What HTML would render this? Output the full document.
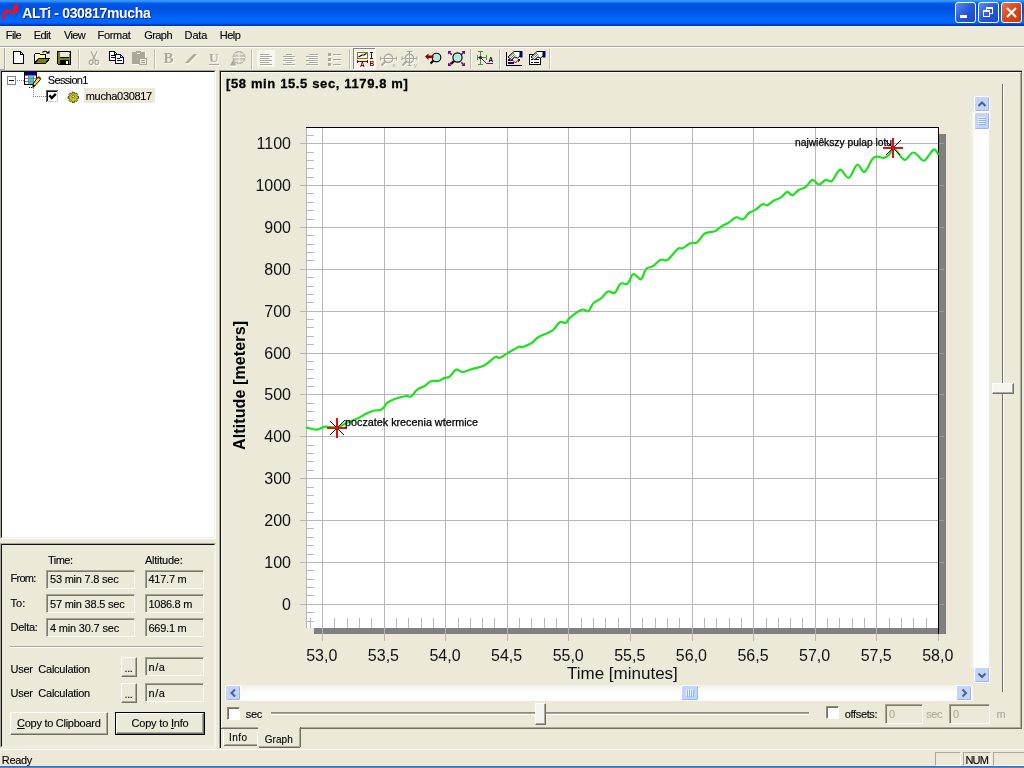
<!DOCTYPE html>
<html><head><meta charset="utf-8">
<style>
html,body{margin:0;padding:0;overflow:hidden;}
body{width:1024px;height:768px;overflow:hidden;background:#ECE9D8;font-family:"Liberation Sans",sans-serif;font-size:11px;color:#000;position:relative;}
.a{position:absolute;white-space:pre;}
div.a{-webkit-text-stroke:0.12px currentColor;}
#title{left:0;top:0;width:1024px;height:26px;background:linear-gradient(to bottom,#3A9CFF 0px,#2F8CFA 1.5px,#0562EA 3px,#0054E3 5px,#0050E0 8px,#0058E8 12px,#0066FF 19px,#0064FA 23px,#0042CA 24.5px,#002E9E 26px);}
.cb{position:absolute;top:2px;width:19px;height:19px;border:1px solid #fff;border-radius:3px;background:linear-gradient(135deg,#5C8CF0 0%,#2658D8 50%,#1B47C8 100%);}
.sunk{position:absolute;box-sizing:border-box;border:1px solid;border-color:#A6A293 #FBFAF6 #FBFAF6 #A6A293;box-shadow:inset 1px 1px 0 #7C796D;}
.btn{position:absolute;box-sizing:border-box;border:1px solid;border-color:#fff #716F64 #716F64 #fff;box-shadow:inset -1px -1px 0 #ACA899;}
.sb{position:absolute;box-sizing:border-box;border:1px solid #fff;border-radius:2px;background:#C3D4FD;box-shadow:inset -1px -1px 0 #9DB4EE;}
</style></head><body>
<div id="root" class="a" style="left:0;top:0;width:1024px;height:768px;overflow:hidden;will-change:transform">

<div id="title" class="a"></div>
<svg class="a" style="left:0;top:0" width="22" height="26"><path d="M3.2 18.5 C3.2 13.5 5 10.8 8 10.8 C10 10.8 10.3 13 12 13 C14.2 13 14.6 10 15.2 7" fill="none" stroke="#E6141E" stroke-width="3" stroke-linecap="round"/><path d="M12.6 6.2 L17.8 4 L17.6 13.5 L15.2 9.2 Z" fill="#F01018" stroke="#E6141E" stroke-width="0.8" stroke-linejoin="round"/></svg>
<div class="a" style="left:22.2px;top:5.33px;font-size:14px;line-height:16.09px;font-weight:bold;color:#fff;letter-spacing:-0.322px;text-shadow:1px 1px 0 #0A2A80;-webkit-text-stroke:0;">ALTi - 030817mucha</div>
<div class="cb" style="left:955px"><div class="a" style="left:4px;top:12px;width:7px;height:3px;background:#fff"></div></div>
<div class="cb" style="left:978px"><div class="a" style="left:7px;top:4px;width:5px;height:4px;border:1px solid #fff;border-top-width:2px"></div><div class="a" style="left:4px;top:7px;width:5px;height:4px;border:1px solid #fff;border-top-width:2px;background:#2E60DC"></div></div>
<div class="cb" style="left:1001px;background:linear-gradient(135deg,#E8734E 0%,#D9461C 50%,#C23A12 100%)"><svg class="a" style="left:0;top:0" width="19" height="19"><path d="M5 5 L14 14 M14 5 L5 14" stroke="#fff" stroke-width="2.2"/></svg></div>
<div class="a" style="left:5.8px;top:29.05px;font-size:11px;line-height:12.64px;color:#000;letter-spacing:-0.632px;">File</div>
<div class="a" style="left:33.7px;top:29.05px;font-size:11px;line-height:12.64px;color:#000;letter-spacing:-0.564px;">Edit</div>
<div class="a" style="left:63.9px;top:29.05px;font-size:11px;line-height:12.64px;color:#000;letter-spacing:-0.636px;">View</div>
<div class="a" style="left:97.6px;top:29.05px;font-size:11px;line-height:12.64px;color:#000;letter-spacing:-0.340px;">Format</div>
<div class="a" style="left:144.2px;top:29.05px;font-size:11px;line-height:12.64px;color:#000;letter-spacing:-0.555px;">Graph</div>
<div class="a" style="left:184.6px;top:29.05px;font-size:11px;line-height:12.64px;color:#000;letter-spacing:-0.159px;">Data</div>
<div class="a" style="left:219.8px;top:29.05px;font-size:11px;line-height:12.64px;color:#000;letter-spacing:-0.531px;">Help</div>
<div class="a" style="left:0px;top:26px;width:1024px;height:1px;background:#EEF2F8;"></div>
<div class="a" style="left:0px;top:46px;width:1024px;height:1px;background:#ACA899;"></div>
<div class="a" style="left:0px;top:47px;width:1024px;height:1px;background:#fff;"></div>
<svg class="a" style="left:0;top:48px" width="560" height="23" shape-rendering="crispEdges">
<rect x="4" y="0" width="1" height="22" fill="#ACA899"/>
<rect x="0" y="21" width="5" height="1" fill="#ACA899"/>
<rect x="5" y="0" width="1" height="22" fill="#F8F7F1"/>
<path transform="translate(0,-48)" d="M13.5 51.5 H20.5 L23.5 54.5 V63.5 H13.5 Z" fill="#fff" stroke="#000" stroke-width="1"  />
<path transform="translate(0,-48)" d="M20.5 51.5 V54.5 H23.5" fill="none" stroke="#000" stroke-width="1"  />
<path transform="translate(0,-48)" d="M34.5 63.5 V54.5 L35.5 53.5 H39.5 L40.5 54.5 H45.5 V58.5 H38.5 Z" fill="#FFFF9C" stroke="#000" stroke-width="1"  />
<path transform="translate(0,-48)" d="M34.5 63.5 L38.5 58.5 H49.5 L45.5 63.5 Z" fill="#808000" stroke="#000" stroke-width="1"  />
<path transform="translate(0,-48)" d="M42.5 52.5 Q45 49.8 47.8 53" fill="none" stroke="#000" stroke-width="1.2" shape-rendering='geometricPrecision' />
<path transform="translate(0,-48)" d="M46 53.5 H49.5 V50.5 Z" fill="#000" stroke="none" stroke-width="1" shape-rendering='geometricPrecision' />
<path transform="translate(0,-48)" d="M57.5 51.5 H70.5 V64.5 H58.5 L57.5 63.5 Z" fill="#808000" stroke="#000" stroke-width="1"  />
<rect x="60" y="4" width="9" height="6" fill="#E8E8E0"/>
<rect x="60" y="9" width="9" height="1" fill="#000"/>
<rect x="60" y="12" width="9" height="4" fill="#000"/>
<rect x="66" y="13" width="2" height="3" fill="#fff"/>
<rect x="69" y="5" width="1" height="1" fill="#fff"/>
<rect x="78" y="1" width="1" height="20" fill="#BFBCB0"/>
<rect x="79" y="1" width="1" height="20" fill="#FAF9F4"/>
<g transform="translate(1,-47)" shape-rendering="geometricPrecision" fill="none" stroke="#fff" stroke-width="1.3"><path d="M91 51.5 L95.5 60.5 M97 51.5 L92.5 60.5"/><ellipse cx="91.2" cy="62.3" rx="1.9" ry="2.2"/><ellipse cx="96.8" cy="62.3" rx="1.9" ry="2.2"/></g>
<g transform="translate(0,-48)" shape-rendering="geometricPrecision" fill="none" stroke="#ACA899" stroke-width="1.3"><path d="M91 51.5 L95.5 60.5 M97 51.5 L92.5 60.5"/><ellipse cx="91.2" cy="62.3" rx="1.9" ry="2.2"/><ellipse cx="96.8" cy="62.3" rx="1.9" ry="2.2"/></g>
<path transform="translate(0,-48)" d="M109.5 51.5 H114.5 L117.5 54.5 V60.5 H109.5 Z" fill="#fff" stroke="#000" stroke-width="1"  />
<path transform="translate(0,-48)" d="M114.5 51.5 V54.5 H117.5" fill="none" stroke="#000" stroke-width="1"  />
<rect x="111" y="7" width="4" height="1" fill="#000"/>
<rect x="111" y="9" width="4" height="1" fill="#000"/>
<path transform="translate(0,-48)" d="M115.5 54.5 H120.5 L123.5 57.5 V63.5 H115.5 Z" fill="#fff" stroke="#000080" stroke-width="1"  />
<path transform="translate(0,-48)" d="M120.5 54.5 V57.5 H123.5" fill="none" stroke="#000080" stroke-width="1"  />
<rect x="117" y="10" width="3" height="1" fill="#000"/>
<rect x="117" y="12" width="5" height="1" fill="#000"/>
<rect x="133" y="5" width="13" height="12" fill="#fff"/>
<rect x="132" y="4" width="13" height="12" fill="#ACA899"/>
<rect x="136" y="3" width="5" height="2" fill="#ACA899"/>
<rect x="137" y="5" width="3" height="1" fill="#fff"/>
<rect x="139" y="10" width="8" height="7" fill="#ACA899"/>
<rect x="140" y="11" width="6" height="5" fill="#ECE9D8"/>
<rect x="141" y="12" width="4" height="1" fill="#ACA899"/>
<rect x="141" y="14" width="4" height="1" fill="#ACA899"/>
<rect x="154" y="1" width="1" height="20" fill="#BFBCB0"/>
<rect x="155" y="1" width="1" height="20" fill="#FAF9F4"/>
<g shape-rendering="geometricPrecision" font-family="Liberation Serif, serif" font-weight="bold" font-size="15">
<text x="164.5" y="16" fill="#fff">B</text><text x="163.5" y="15" fill="#ACA899">B</text>
<text x="210" y="15" fill="#fff" font-size="13.5">U</text><text x="209" y="14" fill="#ACA899" font-size="13.5">U</text>
</g>
<rect x="209" y="16" width="10" height="1" fill="#ACA899"/>
<rect x="210" y="17" width="10" height="1" fill="#fff"/>
<path transform="translate(0,-48)" d="M185 63 H188.2 L197 54 H193.8 Z" fill="#ACA899" stroke="none" stroke-width="1" shape-rendering='geometricPrecision' />
<path transform="translate(0,-48)" d="M186 64 H189.2 L198 55" fill="none" stroke="#fff" stroke-width="1" shape-rendering='geometricPrecision' />
<g shape-rendering="geometricPrecision" transform="translate(0,-48)"><circle cx="239" cy="57.5" r="6" fill="#C9C6B8" stroke="#ACA899"/><path d="M233 57.5 H245 M239 51.5 V63.5 M234.5 54 H243.5 M234.5 61 H243.5" stroke="#F4F3EE" stroke-width="1"/><path d="M230 65.5 L233.5 59 L236 65.5 Z" fill="#ACA899"/><path d="M230 66.5 H237" stroke="#fff"/></g>
<rect x="251" y="1" width="1" height="20" fill="#BFBCB0"/>
<rect x="252" y="1" width="1" height="20" fill="#FAF9F4"/>
<rect x="257" y="2" width="18" height="17" fill="#F6F5EE"/>
<rect x="261" y="7" width="9" height="1" fill="#fff"/>
<rect x="260" y="6" width="9" height="1" fill="#ACA899"/>
<rect x="261" y="9" width="12" height="1" fill="#fff"/>
<rect x="260" y="8" width="12" height="1" fill="#ACA899"/>
<rect x="261" y="11" width="9" height="1" fill="#fff"/>
<rect x="260" y="10" width="9" height="1" fill="#ACA899"/>
<rect x="261" y="13" width="12" height="1" fill="#fff"/>
<rect x="260" y="12" width="12" height="1" fill="#ACA899"/>
<rect x="261" y="15" width="9" height="1" fill="#fff"/>
<rect x="260" y="14" width="9" height="1" fill="#ACA899"/>
<rect x="261" y="17" width="12" height="1" fill="#fff"/>
<rect x="260" y="16" width="12" height="1" fill="#ACA899"/>
<rect x="287" y="7" width="6" height="1" fill="#fff"/>
<rect x="286" y="6" width="6" height="1" fill="#ACA899"/>
<rect x="284" y="9" width="12" height="1" fill="#fff"/>
<rect x="283" y="8" width="12" height="1" fill="#ACA899"/>
<rect x="286" y="11" width="8" height="1" fill="#fff"/>
<rect x="285" y="10" width="8" height="1" fill="#ACA899"/>
<rect x="284" y="13" width="12" height="1" fill="#fff"/>
<rect x="283" y="12" width="12" height="1" fill="#ACA899"/>
<rect x="287" y="15" width="6" height="1" fill="#fff"/>
<rect x="286" y="14" width="6" height="1" fill="#ACA899"/>
<rect x="284" y="17" width="12" height="1" fill="#fff"/>
<rect x="283" y="16" width="12" height="1" fill="#ACA899"/>
<rect x="310" y="7" width="9" height="1" fill="#fff"/>
<rect x="309" y="6" width="9" height="1" fill="#ACA899"/>
<rect x="307" y="9" width="12" height="1" fill="#fff"/>
<rect x="306" y="8" width="12" height="1" fill="#ACA899"/>
<rect x="310" y="11" width="9" height="1" fill="#fff"/>
<rect x="309" y="10" width="9" height="1" fill="#ACA899"/>
<rect x="307" y="13" width="12" height="1" fill="#fff"/>
<rect x="306" y="12" width="12" height="1" fill="#ACA899"/>
<rect x="310" y="15" width="9" height="1" fill="#fff"/>
<rect x="309" y="14" width="9" height="1" fill="#ACA899"/>
<rect x="307" y="17" width="12" height="1" fill="#fff"/>
<rect x="306" y="16" width="12" height="1" fill="#ACA899"/>
<rect x="329" y="6" width="3" height="3" fill="#fff"/>
<rect x="328" y="5" width="3" height="3" fill="#ACA899"/>
<rect x="334" y="7" width="8" height="1" fill="#fff"/>
<rect x="333" y="6" width="8" height="1" fill="#ACA899"/>
<rect x="329" y="11" width="3" height="3" fill="#fff"/>
<rect x="328" y="10" width="3" height="3" fill="#ACA899"/>
<rect x="334" y="12" width="8" height="1" fill="#fff"/>
<rect x="333" y="11" width="8" height="1" fill="#ACA899"/>
<rect x="329" y="16" width="3" height="3" fill="#fff"/>
<rect x="328" y="15" width="3" height="3" fill="#ACA899"/>
<rect x="334" y="17" width="8" height="1" fill="#fff"/>
<rect x="333" y="16" width="8" height="1" fill="#ACA899"/>
<rect x="349" y="1" width="1" height="20" fill="#BFBCB0"/>
<rect x="350" y="1" width="1" height="20" fill="#FAF9F4"/>
<rect x="353" y="0" width="23" height="22" fill="#F6F5EE"/>
<rect x="353" y="0" width="23" height="1" fill="#8A877A"/>
<rect x="353" y="0" width="1" height="22" fill="#8A877A"/>
<rect x="375" y="0" width="1" height="22" fill="#fff"/>
<rect x="353" y="21" width="23" height="1" fill="#fff"/>
<path transform="translate(0,-48)" d="M357.5 52.5 H367.5 V58.5 H357.5 Z" fill="#fff" stroke="#808000" stroke-width="1"  />
<path transform="translate(0,-48)" d="M358.5 57 L362 55 L364 55 L366.5 53.5" fill="none" stroke="#000" stroke-width="1.2" shape-rendering='geometricPrecision' />
<rect x="357" y="13" width="11" height="1" fill="#800000"/>
<rect x="357" y="12" width="1" height="3" fill="#800000"/>
<rect x="367" y="12" width="1" height="3" fill="#800000"/>
<rect x="371" y="5" width="1" height="6" fill="#800000"/>
<rect x="370" y="4" width="3" height="1" fill="#800000"/>
<rect x="370" y="10" width="3" height="1" fill="#800000"/>
<g shape-rendering="geometricPrecision" font-family="Liberation Sans, sans-serif" font-weight="bold" font-size="6.5" fill="#800000"><text x="360" y="19">A</text><text x="369.5" y="18.299999999999997">B</text></g>
<g shape-rendering="geometricPrecision" transform="translate(0,-48)" fill="none">
<g transform="translate(1,1)" stroke="#fff"><circle cx="388.5" cy="58.5" r="4.2" stroke-width="1.4"/><path d="M385.5 61.5 L381.5 65.5" stroke-width="2"/>
<path d="M380.5 58.5 H396.5 M380.5 56.5 V60.5 M396.5 56.5 V60.5" stroke-width="1"/>
</g>
<g transform="translate(0,0)" stroke="#ACA899"><circle cx="388.5" cy="58.5" r="4.2" stroke-width="1.4"/><path d="M385.5 61.5 L381.5 65.5" stroke-width="2"/>
<path d="M380.5 58.5 H396.5 M380.5 56.5 V60.5 M396.5 56.5 V60.5" stroke-width="1"/>
</g>
</g>
<g shape-rendering="geometricPrecision" transform="translate(0,-48)" fill="none">
<g transform="translate(1,1)" stroke="#fff"><circle cx="409.5" cy="58.5" r="4.2" stroke-width="1.4"/><path d="M406.5 61.5 L402.5 65.5" stroke-width="2"/>
<path d="M409.5 51.5 V65.5 M406.5 51.5 H412.5 M407.5 65.5 H411.5 M402.0 58.5 H417.0 M402.0 56.5 V60.5 M417.0 56.5 V60.5" stroke-width="1"/>
</g>
<g transform="translate(0,0)" stroke="#ACA899"><circle cx="409.5" cy="58.5" r="4.2" stroke-width="1.4"/><path d="M406.5 61.5 L402.5 65.5" stroke-width="2"/>
<path d="M409.5 51.5 V65.5 M406.5 51.5 H412.5 M407.5 65.5 H411.5 M402.0 58.5 H417.0 M402.0 56.5 V60.5 M417.0 56.5 V60.5" stroke-width="1"/>
</g>
</g>
<g shape-rendering="geometricPrecision" font-family="Liberation Sans, sans-serif" font-size="6" fill="#ACA899"><text x="392.5" y="19">x</text><text x="414" y="19">y</text></g>
<g shape-rendering="geometricPrecision" transform="translate(0,-48)">
<circle cx="436.5" cy="57.5" r="4.3" fill="#B0ECDC" stroke="#000" stroke-width="1.15"/><path d="M433.5 60.5 L430.5 63.5" stroke="#000" stroke-width="2.2"/>
<path d="M425 56.5 L428.5 53.5 V55.5 H433.5 V58 H428.5 V60 Z" fill="#900000"/>
<circle cx="457.5" cy="57.5" r="4.6" fill="#B0ECDC" stroke="#000" stroke-width="1.15"/><path d="M454 61 L451 64" stroke="#000" stroke-width="2.4"/>
<path d="M448 51 h3.5 l-1.2 1.2 l2 2 l-1.1 1.1 l-2 -2 l-1.2 1.2 Z" fill="#800080"/>
<path d="M465 51 h-3.5 l1.2 1.2 l-2 2 l1.1 1.1 l2 -2 l1.2 1.2 Z" fill="#800080"/>
<path d="M448 66 h3.5 l-1.2 -1.2 l2 -2 l-1.1 -1.1 l-2 2 l-1.2 -1.2 Z" fill="#800080"/>
<path d="M465 66 h-3.5 l1.2 -1.2 l-2 -2 l1.1 -1.1 l2 2 l1.2 -1.2 Z" fill="#800080"/>
</g>
<rect x="470" y="1" width="1" height="20" fill="#BFBCB0"/>
<rect x="471" y="1" width="1" height="20" fill="#FAF9F4"/>
<rect x="480" y="3" width="1" height="14" fill="#30A030"/>
<rect x="478" y="3" width="5" height="1" fill="#30A030"/>
<rect x="478" y="16" width="5" height="1" fill="#30A030"/>
<rect x="477" y="9" width="10" height="1" fill="#30A030"/>
<rect x="477" y="7" width="1" height="5" fill="#30A030"/>
<rect x="486" y="7" width="1" height="5" fill="#30A030"/>
<path transform="translate(0,-48)" d="M480.5 57.5 L486.5 63.5 H493" fill="none" stroke="#800080" stroke-width="1" shape-rendering='geometricPrecision' />
<circle cx="480.5" cy="9.5" r="1.6" fill="#600040" shape-rendering="geometricPrecision"/>
<text x="488.5" y="14" shape-rendering="geometricPrecision" font-family="Liberation Sans, sans-serif" font-weight="bold" font-size="6.5" fill="#000">A</text>
<rect x="499" y="1" width="1" height="20" fill="#BFBCB0"/>
<rect x="500" y="1" width="1" height="20" fill="#FAF9F4"/>
<rect x="506" y="4" width="1" height="14" fill="#000"/>
<rect x="506" y="17" width="16" height="1" fill="#000"/>
<rect x="508" y="12" width="5" height="1" fill="#C00000"/>
<rect x="508" y="14" width="6" height="2" fill="#0000C0"/>
<rect x="508" y="11" width="2" height="2" fill="#400000"/>
<path transform="translate(0,-48)" d="M513 60.5 L515.5 63 L517.5 60.5 L519 62" fill="none" stroke="#C00000" stroke-width="1" shape-rendering='geometricPrecision' />
<rect x="518" y="11" width="2" height="2" fill="#202020"/>
<g shape-rendering="geometricPrecision" transform="translate(506,-48)">
<path d="M2 57 L8 51.5 H14 V56 L11.5 58 L8.5 57 L6 60 Z" fill="#fff" stroke="#000" stroke-width="1"/>
<path d="M3.5 57 L8 53 M5 58 L9 54 M6 59 L10 55.5" stroke="#606060" stroke-width="0.8"/>
<path d="M14 51 H16.5 V57.5 H14 Z" fill="#000080"/>
</g>
<path transform="translate(0,-48)" d="M529.5 54.5 H540.5 V64.5 H529.5 Z" fill="#fff" stroke="#000" stroke-width="1"  />
<rect x="529" y="7" width="1" height="10" fill="#000"/>
<rect x="531" y="11" width="2" height="1" fill="#000"/>
<rect x="534" y="11" width="5" height="1" fill="#000"/>
<rect x="531" y="14" width="2" height="1" fill="#000"/>
<rect x="534" y="14" width="5" height="1" fill="#000"/>
<g shape-rendering="geometricPrecision" transform="translate(529,-48)">
<path d="M2 57 L8 51.5 H14 V56 L11.5 58 L8.5 57 L6 60 Z" fill="#fff" stroke="#000" stroke-width="1"/>
<path d="M3.5 57 L8 53 M5 58 L9 54 M6 59 L10 55.5" stroke="#606060" stroke-width="0.8"/>
<path d="M14 51 H16.5 V57.5 H14 Z" fill="#000080"/>
</g>
<rect x="549" y="1" width="1" height="20" fill="#BFBCB0"/>
<rect x="550" y="1" width="1" height="20" fill="#FAF9F4"/>
</svg>
<div class="a" style="left:0px;top:70px;width:216px;height:469px;background:#fff;box-sizing:border-box;border-top:1px solid #ACA899;border-left:1px solid #ACA899;border-right:1px solid #fff;border-bottom:1px solid #fff;"></div>
<div class="a" style="left:1px;top:71px;width:214px;height:467px;background:#fff;box-sizing:border-box;border-top:1px solid #111;border-left:1px solid #111;border-right:1px solid #F1EFE2;border-bottom:1px solid #F1EFE2;"></div>
<svg class="a" style="left:0;top:70px" width="216" height="40" shape-rendering="crispEdges">
<rect x="7.5" y="6.5" width="8" height="8" fill="#fff" stroke="#848484"/>
<rect x="9" y="10" width="5" height="1" fill="#000"/>
<rect x="17" y="10" width="1" height="1" fill="#808080"/>
<rect x="19" y="10" width="1" height="1" fill="#808080"/>
<rect x="21" y="10" width="1" height="1" fill="#808080"/>
<rect x="23" y="10" width="1" height="1" fill="#808080"/>
<rect x="33" y="18" width="1" height="1" fill="#808080"/>
<rect x="33" y="20" width="1" height="1" fill="#808080"/>
<rect x="33" y="22" width="1" height="1" fill="#808080"/>
<rect x="33" y="24" width="1" height="1" fill="#808080"/>
<rect x="33" y="26" width="1" height="1" fill="#808080"/>
<rect x="35" y="26" width="1" height="1" fill="#808080"/>
<rect x="37" y="26" width="1" height="1" fill="#808080"/>
<rect x="39" y="26" width="1" height="1" fill="#808080"/>
<rect x="41" y="26" width="1" height="1" fill="#808080"/>
<rect x="43" y="26" width="1" height="1" fill="#808080"/>
<rect x="45" y="26" width="1" height="1" fill="#808080"/>
<rect x="24" y="2" width="13" height="13" fill="#fff"/>
<rect x="24" y="2" width="13" height="3" fill="#000080"/>
<rect x="29" y="5" width="4" height="9" fill="#30D8D0"/>
<rect x="24" y="5" width="13" height="1" fill="#808080"/>
<rect x="24" y="8" width="13" height="1" fill="#808080"/>
<rect x="24" y="11" width="13" height="1" fill="#808080"/>
<rect x="28" y="5" width="1" height="9" fill="#808080"/>
<rect x="33" y="5" width="1" height="9" fill="#808080"/>
<rect x="24" y="2" width="1" height="13" fill="#000"/>
<rect x="24" y="14" width="11" height="1" fill="#000"/>
<rect x="36" y="2" width="1" height="6" fill="#000"/>
<path d="M38 7 L40.5 9.5 L35.5 15 L33 17.5 L33 14 Z" fill="#E8E060" stroke="#000" stroke-width="1" shape-rendering="auto"/>
<path d="M33 14.5 L35.5 15.5 L33 17.8 Z" fill="#000" shape-rendering="auto"/>
<path d="M37.2 7.2 L39 6 L41.3 8.3 L40.3 9.8 Z" fill="#804000" shape-rendering="auto"/>
<rect x="29" y="17" width="1" height="1" fill="#000"/><rect x="31" y="17" width="1" height="1" fill="#000"/>
<rect x="46" y="20" width="12" height="12" fill="#fff"/>
<rect x="46" y="20" width="12" height="1" fill="#606060"/><rect x="46" y="20" width="1" height="12" fill="#606060"/>
<rect x="47" y="21" width="10" height="1" fill="#101010"/><rect x="47" y="21" width="1" height="10" fill="#101010"/>
<rect x="57" y="21" width="1" height="11" fill="#D4D0C8"/><rect x="47" y="31" width="11" height="1" fill="#D4D0C8"/>
<path d="M49.3 25.3 L51.8 28 L55.8 23.8" fill="none" stroke="#000" stroke-width="2.5" shape-rendering="auto"/>
<g shape-rendering="auto" transform="translate(73.3,26.4) scale(0.8)">
<path d="M-1.3 -5.3 h2.6 v1.6 l1.2 .5 1.2-1.1 1.8 1.8 -1.1 1.2 .5 1.2 h1.6 v2.6 h-1.6 l-.5 1.2 1.1 1.2 -1.8 1.8 -1.2-1.1 -1.2 .5 v1.6 h-2.6 v-1.6 l-1.2-.5 -1.2 1.1 -1.8-1.8 1.1-1.2 -.5-1.2 h-1.6 v-2.6 h1.6 l.5-1.2 -1.1-1.2 1.8-1.8 1.2 1.1 1.2-.5 z" fill="#C8C820" stroke="#303000" stroke-width="1"/>
<circle cx="0" cy="0" r="1.6" fill="#fff" stroke="#303000" stroke-width="0.9"/>
</g>
</svg>
<div class="a" style="left:47.8px;top:73.64px;font-size:11px;line-height:12.64px;color:#000;letter-spacing:-0.657px;">Session1</div>
<div class="a" style="left:84px;top:88px;width:71px;height:15px;background:#ECE9D8;"></div>
<div class="a" style="left:85.8px;top:90.05px;font-size:11px;line-height:12.64px;color:#000;letter-spacing:-0.339px;">mucha030817</div>
<div class="a" style="left:0px;top:543px;width:216px;height:205px;background:transparent;box-sizing:border-box;border-top:1px solid #ACA899;border-left:1px solid #ACA899;border-right:1px solid #F6F5EE;border-bottom:1px solid #EFEDE2;"></div>
<div class="a" style="left:1px;top:544px;width:214px;height:203px;background:transparent;box-sizing:border-box;border-top:1px solid #111;border-left:1px solid #111;border-right:1px solid #F1EFE2;border-bottom:1px solid #F1EFE2;"></div>
<div class="a" style="left:48px;top:553.84px;font-size:11px;line-height:12.64px;color:#000;letter-spacing:-0.519px;">Time:</div>
<div class="a" style="left:145px;top:553.84px;font-size:11px;line-height:12.64px;color:#000;letter-spacing:-0.250px;">Altitude:</div>
<div class="a" style="left:10.5px;top:572.14px;font-size:11px;line-height:12.64px;color:#000;letter-spacing:-0.744px;">From:</div>
<div class="sunk" style="left:46px;top:570px;width:89px;height:19px"></div>
<div class="sunk" style="left:145px;top:570px;width:59px;height:19px"></div>
<div class="a" style="left:50px;top:573.04px;font-size:11px;line-height:12.64px;color:#000;letter-spacing:-0.217px;">53 min 7.8 sec</div>
<div class="a" style="left:148.5px;top:573.04px;font-size:11px;line-height:12.64px;color:#000;letter-spacing:-0.250px;">417.7 m</div>
<div class="a" style="left:10.5px;top:596.64px;font-size:11px;line-height:12.64px;color:#000;letter-spacing:0.108px;">To:</div>
<div class="sunk" style="left:46px;top:594px;width:89px;height:19px"></div>
<div class="sunk" style="left:145px;top:594px;width:59px;height:19px"></div>
<div class="a" style="left:50px;top:597.54px;font-size:11px;line-height:12.64px;color:#000;letter-spacing:-0.211px;">57 min 38.5 sec</div>
<div class="a" style="left:148.5px;top:597.54px;font-size:11px;line-height:12.64px;color:#000;letter-spacing:-0.296px;">1086.8 m</div>
<div class="a" style="left:10.5px;top:621.14px;font-size:11px;line-height:12.64px;color:#000;letter-spacing:-0.290px;">Delta:</div>
<div class="sunk" style="left:46px;top:618px;width:89px;height:19px"></div>
<div class="sunk" style="left:145px;top:618px;width:59px;height:19px"></div>
<div class="a" style="left:50px;top:622.04px;font-size:11px;line-height:12.64px;color:#000;letter-spacing:-0.182px;">4 min 30.7 sec</div>
<div class="a" style="left:148.5px;top:622.04px;font-size:11px;line-height:12.64px;color:#000;letter-spacing:-0.250px;">669.1 m</div>
<div class="a" style="left:10px;top:646px;width:193px;height:1px;background:#ACA899;"></div>
<div class="a" style="left:10px;top:647px;width:193px;height:1px;background:#fff;"></div>
<div class="a" style="left:10.5px;top:662.75px;font-size:11px;line-height:12.64px;color:#000;letter-spacing:-0.251px;">User  Calculation</div>
<div class="btn" style="left:121px;top:657px;width:16px;height:20px"></div>
<div class="a" style="left:124.5px;top:662.04px;font-size:11px;line-height:12.64px;color:#000;letter-spacing:-0.390px;">...</div>
<div class="sunk" style="left:145px;top:657px;width:59px;height:19px"></div>
<div class="a" style="left:148.5px;top:661.04px;font-size:11px;line-height:12.64px;color:#000;letter-spacing:0.569px;">n/a</div>
<div class="a" style="left:10.5px;top:686.54px;font-size:11px;line-height:12.64px;color:#000;letter-spacing:-0.251px;">User  Calculation</div>
<div class="btn" style="left:121px;top:683px;width:16px;height:20px"></div>
<div class="a" style="left:124.5px;top:687.54px;font-size:11px;line-height:12.64px;color:#000;letter-spacing:-0.390px;">...</div>
<div class="sunk" style="left:145px;top:683px;width:59px;height:19px"></div>
<div class="a" style="left:148.5px;top:686.54px;font-size:11px;line-height:12.64px;color:#000;letter-spacing:0.569px;">n/a</div>
<div class="btn" style="left:10px;top:712px;width:98px;height:23px"></div>
<div class="a" style="left:17px;top:716.54px;font-size:11px;line-height:12.64px;color:#000;letter-spacing:-0.268px;"><u>C</u>opy to Clipboard</div>
<div class="a" style="left:115px;top:712px;width:90px;height:23px;box-sizing:border-box;border:1px solid #000"></div>
<div class="btn" style="left:116px;top:713px;width:88px;height:21px"></div>
<div class="a" style="left:131.5px;top:716.54px;font-size:11px;line-height:12.64px;color:#000;letter-spacing:-0.193px;">Copy to <u>I</u>nfo</div>
<div class="a" style="left:219px;top:70px;width:803px;height:1px;background:#ACA899;"></div>
<div class="a" style="left:219px;top:70px;width:1px;height:678px;background:#ACA899;"></div>
<div class="a" style="left:220px;top:71px;width:802px;height:1px;background:#111;"></div>
<div class="a" style="left:220px;top:71px;width:1px;height:677px;background:#111;"></div>
<div class="a" style="left:221px;top:72px;width:800px;height:1px;background:#FBFAF6;"></div>
<div class="a" style="left:221px;top:72px;width:1px;height:656px;background:#FBFAF6;"></div>
<div class="a" style="left:1020px;top:73px;width:1px;height:655px;background:#ACA899;"></div>
<div class="a" style="left:1021px;top:72px;width:1px;height:657px;background:#716F64;"></div>
<div class="a" style="left:301px;top:727px;width:720px;height:1px;background:#ACA899;"></div>
<div class="a" style="left:301px;top:728px;width:721px;height:1px;background:#716F64;"></div>
<div class="a" style="left:222px;top:727px;width:36px;height:1px;background:#ACA899;"></div>
<div class="a" style="left:221px;top:728px;width:37px;height:1px;background:#716F64;"></div>
<div class="a" style="left:226px;top:77.03px;font-size:13px;line-height:14.94px;font-weight:bold;color:#000;letter-spacing:0.629px;-webkit-text-stroke:0.3px currentColor;">[58 min 15.5 sec, 1179.8 m]</div>
<div class="a" style="left:969px;top:112px;width:20px;height:556px;background:linear-gradient(to right,#ECE9D8 0%,#F0EEE2 14%,#FCFCFA 27%,#FEFEFC 100%);"></div>
<div class="sb" style="left:974px;top:96px;width:16px;height:16px"></div>
<svg class="a" style="left:974px;top:96px" width="16" height="16"><path d="M4.5 10 L8 6.5 L11.5 10" fill="none" stroke="#4D6185" stroke-width="2"/></svg>
<div class="sb" style="left:974px;top:112px;width:16px;height:18px"></div>
<div class="a" style="left:978px;top:117px;width:7px;height:1px;background:#EEF4FE;"></div>
<div class="a" style="left:978px;top:119px;width:7px;height:1px;background:#EEF4FE;"></div>
<div class="a" style="left:978px;top:121px;width:7px;height:1px;background:#EEF4FE;"></div>
<div class="a" style="left:978px;top:123px;width:7px;height:1px;background:#EEF4FE;"></div>
<div class="a" style="left:979px;top:118px;width:7px;height:1px;background:#8CB0F8;"></div>
<div class="a" style="left:979px;top:120px;width:7px;height:1px;background:#8CB0F8;"></div>
<div class="a" style="left:979px;top:122px;width:7px;height:1px;background:#8CB0F8;"></div>
<div class="a" style="left:979px;top:124px;width:7px;height:1px;background:#8CB0F8;"></div>
<div class="sb" style="left:974px;top:667px;width:16px;height:16px"></div>
<svg class="a" style="left:974px;top:667px" width="16" height="16"><path d="M4.5 6.5 L8 10 L11.5 6.5" fill="none" stroke="#4D6185" stroke-width="2"/></svg>
<div class="a" style="left:1002px;top:84px;width:1px;height:608px;background:#716F64;"></div>
<div class="a" style="left:1003px;top:84px;width:1px;height:608px;background:#fff;"></div>
<div class="btn" style="left:992px;top:383px;width:22px;height:11px;background:#F5F4EF"></div>
<div class="a" style="left:226px;top:685px;width:747px;height:16px;background:linear-gradient(to bottom,#F1EFE6 0%,#FDFDFB 45%,#FEFEFC 100%);"></div>
<div class="sb" style="left:225px;top:685px;width:16px;height:16px"></div>
<svg class="a" style="left:225px;top:685px" width="16" height="16"><path d="M10 4.5 L6.5 8 L10 11.5" fill="none" stroke="#4D6185" stroke-width="2"/></svg>
<div class="sb" style="left:956px;top:685px;width:16px;height:16px"></div>
<svg class="a" style="left:956px;top:685px" width="16" height="16"><path d="M6.5 4.5 L10 8 L6.5 11.5" fill="none" stroke="#4D6185" stroke-width="2"/></svg>
<div class="sb" style="left:681px;top:685px;width:18px;height:16px"></div>
<div class="a" style="left:686px;top:689px;width:1px;height:7px;background:#EEF4FE;"></div>
<div class="a" style="left:688px;top:689px;width:1px;height:7px;background:#EEF4FE;"></div>
<div class="a" style="left:690px;top:689px;width:1px;height:7px;background:#EEF4FE;"></div>
<div class="a" style="left:692px;top:689px;width:1px;height:7px;background:#EEF4FE;"></div>
<div class="a" style="left:687px;top:690px;width:1px;height:7px;background:#8CB0F8;"></div>
<div class="a" style="left:689px;top:690px;width:1px;height:7px;background:#8CB0F8;"></div>
<div class="a" style="left:691px;top:690px;width:1px;height:7px;background:#8CB0F8;"></div>
<div class="a" style="left:693px;top:690px;width:1px;height:7px;background:#8CB0F8;"></div>
<div class="a" style="left:227px;top:707px;width:13px;height:13px;box-sizing:border-box;background:#fff;border:1px solid;border-color:#8E8B7E #fff #fff #8E8B7E;box-shadow:inset 1px 1px 0 #716F64"></div>
<div class="a" style="left:245.7px;top:708.14px;font-size:11px;line-height:12.64px;color:#000;letter-spacing:-0.273px;">sec</div>
<div class="a" style="left:271px;top:712px;width:538px;height:1px;background:#8E8B7E;"></div>
<div class="a" style="left:271px;top:713px;width:538px;height:1px;background:#ACA899;"></div>
<div class="a" style="left:271px;top:714px;width:538px;height:1px;background:#fff;"></div>
<div class="btn" style="left:535px;top:703px;width:11px;height:22px;background:#F5F4EF"></div>
<div class="a" style="left:826px;top:706px;width:13px;height:13px;box-sizing:border-box;background:#fff;border:1px solid;border-color:#8E8B7E #fff #fff #8E8B7E;box-shadow:inset 1px 1px 0 #716F64"></div>
<div class="a" style="left:844.8px;top:708.14px;font-size:11px;line-height:12.64px;color:#000;letter-spacing:-0.358px;">offsets:</div>
<div class="sunk" style="left:885px;top:704px;width:38px;height:20px"></div>
<div class="sunk" style="left:949px;top:704px;width:41px;height:20px"></div>
<div class="a" style="left:889px;top:708.14px;font-size:11px;line-height:12.64px;color:#ACA899;">0</div>
<div class="a" style="left:953px;top:708.14px;font-size:11px;line-height:12.64px;color:#ACA899;">0</div>
<div class="a" style="left:926.2px;top:708.14px;font-size:11px;line-height:12.64px;color:#ACA899;letter-spacing:-0.373px;">sec</div>
<div class="a" style="left:996.5px;top:708.14px;font-size:11px;line-height:12.64px;color:#ACA899;">m</div>
<div class="a" style="left:223px;top:729px;width:1px;height:16px;background:#fff;"></div>
<div class="a" style="left:224px;top:745px;width:33px;height:1px;background:#716F64;"></div>
<div class="a" style="left:225px;top:744px;width:32px;height:1px;background:#ACA899;"></div>
<div class="a" style="left:257px;top:729px;width:1px;height:17px;background:#fff;"></div>
<div class="a" style="left:229px;top:731.85px;font-size:10px;line-height:11.49px;color:#000;letter-spacing:0.480px;">Info</div>
<div class="a" style="left:258px;top:727px;width:43px;height:2px;background:#ECE9D8;"></div>
<div class="a" style="left:259px;top:746px;width:41px;height:1px;background:#ACA899;"></div>
<div class="a" style="left:259px;top:747px;width:41px;height:1px;background:#716F64;"></div>
<div class="a" style="left:300px;top:727px;width:1px;height:20px;background:#716F64;"></div>
<div class="a" style="left:299px;top:728px;width:1px;height:18px;background:#ACA899;"></div>
<div class="a" style="left:264.75px;top:733.85px;font-size:10px;line-height:11.49px;color:#000;letter-spacing:0.041px;">Graph</div>
<svg id="chart" class="a" style="left:0;top:0" width="1024" height="768">
<rect x="306" y="127" width="633" height="501" fill="#fff"/>
<rect x="939" y="134" width="7" height="500" fill="#808080"/>
<rect x="314" y="628" width="632" height="6" fill="#808080"/>
<rect x="310" y="618" width="1" height="10" fill="#B8B8B8"/>
<rect x="334" y="618" width="1" height="10" fill="#B8B8B8"/>
<rect x="347" y="618" width="1" height="10" fill="#B8B8B8"/>
<rect x="359" y="618" width="1" height="10" fill="#B8B8B8"/>
<rect x="371" y="618" width="1" height="10" fill="#B8B8B8"/>
<rect x="396" y="618" width="1" height="10" fill="#B8B8B8"/>
<rect x="408" y="618" width="1" height="10" fill="#B8B8B8"/>
<rect x="421" y="618" width="1" height="10" fill="#B8B8B8"/>
<rect x="433" y="618" width="1" height="10" fill="#B8B8B8"/>
<rect x="458" y="618" width="1" height="10" fill="#B8B8B8"/>
<rect x="470" y="618" width="1" height="10" fill="#B8B8B8"/>
<rect x="482" y="618" width="1" height="10" fill="#B8B8B8"/>
<rect x="494" y="618" width="1" height="10" fill="#B8B8B8"/>
<rect x="519" y="618" width="1" height="10" fill="#B8B8B8"/>
<rect x="531" y="618" width="1" height="10" fill="#B8B8B8"/>
<rect x="544" y="618" width="1" height="10" fill="#B8B8B8"/>
<rect x="556" y="618" width="1" height="10" fill="#B8B8B8"/>
<rect x="581" y="618" width="1" height="10" fill="#B8B8B8"/>
<rect x="593" y="618" width="1" height="10" fill="#B8B8B8"/>
<rect x="605" y="618" width="1" height="10" fill="#B8B8B8"/>
<rect x="618" y="618" width="1" height="10" fill="#B8B8B8"/>
<rect x="642" y="618" width="1" height="10" fill="#B8B8B8"/>
<rect x="655" y="618" width="1" height="10" fill="#B8B8B8"/>
<rect x="667" y="618" width="1" height="10" fill="#B8B8B8"/>
<rect x="679" y="618" width="1" height="10" fill="#B8B8B8"/>
<rect x="704" y="618" width="1" height="10" fill="#B8B8B8"/>
<rect x="716" y="618" width="1" height="10" fill="#B8B8B8"/>
<rect x="729" y="618" width="1" height="10" fill="#B8B8B8"/>
<rect x="741" y="618" width="1" height="10" fill="#B8B8B8"/>
<rect x="766" y="618" width="1" height="10" fill="#B8B8B8"/>
<rect x="778" y="618" width="1" height="10" fill="#B8B8B8"/>
<rect x="790" y="618" width="1" height="10" fill="#B8B8B8"/>
<rect x="802" y="618" width="1" height="10" fill="#B8B8B8"/>
<rect x="827" y="618" width="1" height="10" fill="#B8B8B8"/>
<rect x="839" y="618" width="1" height="10" fill="#B8B8B8"/>
<rect x="852" y="618" width="1" height="10" fill="#B8B8B8"/>
<rect x="864" y="618" width="1" height="10" fill="#B8B8B8"/>
<rect x="889" y="618" width="1" height="10" fill="#B8B8B8"/>
<rect x="901" y="618" width="1" height="10" fill="#B8B8B8"/>
<rect x="913" y="618" width="1" height="10" fill="#B8B8B8"/>
<rect x="926" y="618" width="1" height="10" fill="#B8B8B8"/>
<rect x="307" y="135" width="7" height="1" fill="#B8B8B8"/>
<rect x="307" y="152" width="7" height="1" fill="#B8B8B8"/>
<rect x="307" y="160" width="7" height="1" fill="#B8B8B8"/>
<rect x="307" y="168" width="7" height="1" fill="#B8B8B8"/>
<rect x="307" y="177" width="7" height="1" fill="#B8B8B8"/>
<rect x="307" y="193" width="7" height="1" fill="#B8B8B8"/>
<rect x="307" y="202" width="7" height="1" fill="#B8B8B8"/>
<rect x="307" y="210" width="7" height="1" fill="#B8B8B8"/>
<rect x="307" y="219" width="7" height="1" fill="#B8B8B8"/>
<rect x="307" y="235" width="7" height="1" fill="#B8B8B8"/>
<rect x="307" y="244" width="7" height="1" fill="#B8B8B8"/>
<rect x="307" y="252" width="7" height="1" fill="#B8B8B8"/>
<rect x="307" y="260" width="7" height="1" fill="#B8B8B8"/>
<rect x="307" y="277" width="7" height="1" fill="#B8B8B8"/>
<rect x="307" y="286" width="7" height="1" fill="#B8B8B8"/>
<rect x="307" y="294" width="7" height="1" fill="#B8B8B8"/>
<rect x="307" y="302" width="7" height="1" fill="#B8B8B8"/>
<rect x="307" y="319" width="7" height="1" fill="#B8B8B8"/>
<rect x="307" y="327" width="7" height="1" fill="#B8B8B8"/>
<rect x="307" y="336" width="7" height="1" fill="#B8B8B8"/>
<rect x="307" y="344" width="7" height="1" fill="#B8B8B8"/>
<rect x="307" y="361" width="7" height="1" fill="#B8B8B8"/>
<rect x="307" y="369" width="7" height="1" fill="#B8B8B8"/>
<rect x="307" y="378" width="7" height="1" fill="#B8B8B8"/>
<rect x="307" y="386" width="7" height="1" fill="#B8B8B8"/>
<rect x="307" y="403" width="7" height="1" fill="#B8B8B8"/>
<rect x="307" y="411" width="7" height="1" fill="#B8B8B8"/>
<rect x="307" y="420" width="7" height="1" fill="#B8B8B8"/>
<rect x="307" y="428" width="7" height="1" fill="#B8B8B8"/>
<rect x="307" y="445" width="7" height="1" fill="#B8B8B8"/>
<rect x="307" y="453" width="7" height="1" fill="#B8B8B8"/>
<rect x="307" y="461" width="7" height="1" fill="#B8B8B8"/>
<rect x="307" y="470" width="7" height="1" fill="#B8B8B8"/>
<rect x="307" y="487" width="7" height="1" fill="#B8B8B8"/>
<rect x="307" y="495" width="7" height="1" fill="#B8B8B8"/>
<rect x="307" y="503" width="7" height="1" fill="#B8B8B8"/>
<rect x="307" y="512" width="7" height="1" fill="#B8B8B8"/>
<rect x="307" y="528" width="7" height="1" fill="#B8B8B8"/>
<rect x="307" y="537" width="7" height="1" fill="#B8B8B8"/>
<rect x="307" y="545" width="7" height="1" fill="#B8B8B8"/>
<rect x="307" y="554" width="7" height="1" fill="#B8B8B8"/>
<rect x="307" y="570" width="7" height="1" fill="#B8B8B8"/>
<rect x="307" y="579" width="7" height="1" fill="#B8B8B8"/>
<rect x="307" y="587" width="7" height="1" fill="#B8B8B8"/>
<rect x="307" y="595" width="7" height="1" fill="#B8B8B8"/>
<rect x="307" y="612" width="7" height="1" fill="#B8B8B8"/>
<rect x="307" y="621" width="7" height="1" fill="#B8B8B8"/>
<rect x="322" y="128" width="1" height="513" fill="#B6B6B6"/>
<rect x="384" y="128" width="1" height="513" fill="#B6B6B6"/>
<rect x="445" y="128" width="1" height="513" fill="#B6B6B6"/>
<rect x="507" y="128" width="1" height="513" fill="#B6B6B6"/>
<rect x="568" y="128" width="1" height="513" fill="#B6B6B6"/>
<rect x="630" y="128" width="1" height="513" fill="#B6B6B6"/>
<rect x="692" y="128" width="1" height="513" fill="#B6B6B6"/>
<rect x="753" y="128" width="1" height="513" fill="#B6B6B6"/>
<rect x="815" y="128" width="1" height="513" fill="#B6B6B6"/>
<rect x="876" y="128" width="1" height="513" fill="#B6B6B6"/>
<rect x="938" y="128" width="1" height="513" fill="#B6B6B6"/>
<rect x="300" y="143" width="638" height="1" fill="#B6B6B6"/>
<rect x="939" y="143" width="5" height="1" fill="#999"/>
<rect x="300" y="185" width="638" height="1" fill="#B6B6B6"/>
<rect x="939" y="185" width="5" height="1" fill="#999"/>
<rect x="300" y="227" width="638" height="1" fill="#B6B6B6"/>
<rect x="939" y="227" width="5" height="1" fill="#999"/>
<rect x="300" y="269" width="638" height="1" fill="#B6B6B6"/>
<rect x="939" y="269" width="5" height="1" fill="#999"/>
<rect x="300" y="311" width="638" height="1" fill="#B6B6B6"/>
<rect x="939" y="311" width="5" height="1" fill="#999"/>
<rect x="300" y="353" width="638" height="1" fill="#B6B6B6"/>
<rect x="939" y="353" width="5" height="1" fill="#999"/>
<rect x="300" y="394" width="638" height="1" fill="#B6B6B6"/>
<rect x="939" y="394" width="5" height="1" fill="#999"/>
<rect x="300" y="436" width="638" height="1" fill="#B6B6B6"/>
<rect x="939" y="436" width="5" height="1" fill="#999"/>
<rect x="300" y="478" width="638" height="1" fill="#B6B6B6"/>
<rect x="939" y="478" width="5" height="1" fill="#999"/>
<rect x="300" y="520" width="638" height="1" fill="#B6B6B6"/>
<rect x="939" y="520" width="5" height="1" fill="#999"/>
<rect x="300" y="562" width="638" height="1" fill="#B6B6B6"/>
<rect x="939" y="562" width="5" height="1" fill="#999"/>
<rect x="300" y="604" width="638" height="1" fill="#B6B6B6"/>
<rect x="939" y="604" width="5" height="1" fill="#999"/>
<rect x="306" y="128" width="1" height="500" fill="#B6B6B6"/>
<rect x="306" y="127" width="633" height="1" fill="#000"/>
<rect x="938" y="127" width="1" height="507" fill="#000"/>
<path d="M306.8 427.7 C308.6 428.0 313.3 429.8 316.6 429.6 C319.9 429.4 321.7 427.1 325.4 426.7 C329.1 426.3 333.2 428.0 337.1 427.3 C341.0 426.6 343.0 424.5 346.9 422.8 C350.8 421.1 355.1 419.6 358.6 417.9 C362.1 416.2 363.6 414.9 366.4 413.6 C369.2 412.3 371.7 411.1 374.2 410.5 C376.7 409.9 378.3 410.7 380.1 410.1 C381.9 409.5 382.8 408.3 384.0 407.1 C385.2 405.9 385.5 404.4 386.9 403.2 C388.3 402.0 389.9 401.2 391.8 400.3 C393.7 399.4 395.1 398.8 397.7 398.0 C400.3 397.2 404.0 396.3 406.4 396.0 C408.8 395.7 409.4 397.6 411.3 396.4 C413.2 395.2 414.7 391.5 417.2 389.6 C419.7 387.7 422.5 387.2 425.0 385.7 C427.5 384.2 428.4 382.1 430.9 381.2 C433.4 380.3 436.3 381.4 438.7 380.8 C441.1 380.2 442.6 378.6 444.5 377.9 C446.4 377.2 447.6 378.1 449.4 376.9 C451.2 375.7 452.9 372.3 454.3 371.0 C455.7 369.7 455.6 369.4 457.2 369.6 C458.8 369.8 460.5 372.1 463.1 372.0 C465.7 371.9 468.0 370.3 471.9 369.1 C475.8 367.9 480.4 367.4 484.6 365.2 C488.8 363.0 492.6 358.3 495.3 357.0 C498.0 355.7 497.3 358.5 499.5 357.9 C501.7 357.3 503.8 355.4 507.3 353.4 C510.8 351.4 516.5 347.9 519.1 346.8 C521.7 345.7 519.8 347.8 522.0 347.2 C524.2 346.6 528.2 345.1 531.2 343.3 C534.2 341.5 534.8 339.3 538.6 337.0 C542.4 334.7 548.5 333.3 552.3 330.6 C556.1 327.9 557.3 323.6 559.7 322.2 C562.1 320.8 564.1 323.6 565.9 322.8 C567.7 322.0 567.0 320.3 569.8 317.9 C572.6 315.5 578.3 310.9 581.6 309.7 C584.9 308.5 586.3 312.3 588.4 311.1 C590.5 309.9 591.0 305.5 593.3 303.2 C595.6 300.9 598.5 300.5 601.1 298.4 C603.7 296.3 605.4 292.5 607.9 291.5 C610.4 290.5 612.5 294.3 614.8 292.9 C617.1 291.5 618.3 285.4 620.6 283.7 C622.9 282.0 625.4 285.3 627.5 283.7 C629.6 282.1 630.9 276.5 632.3 274.9 C633.7 273.3 633.7 274.1 635.3 274.9 C636.9 275.7 639.2 280.2 641.1 279.2 C643.0 278.2 643.9 271.5 646.0 269.1 C648.1 266.7 650.3 267.8 652.9 266.1 C655.5 264.4 658.1 260.8 660.7 259.7 C663.3 258.6 664.5 261.8 667.5 259.9 C670.5 258.0 674.9 251.2 677.6 249.1 C680.3 247.0 680.2 249.2 682.5 248.2 C684.8 247.2 687.7 244.4 690.3 243.3 C692.9 242.2 694.5 244.1 697.1 242.3 C699.7 240.5 701.7 235.5 704.9 233.5 C708.1 231.5 711.5 232.6 714.7 231.2 C717.9 229.8 720.0 227.2 722.5 225.7 C725.0 224.2 725.9 224.3 728.4 222.8 C730.9 221.3 733.6 217.9 736.2 217.3 C738.8 216.7 740.7 220.1 743.0 219.3 C745.3 218.5 746.6 214.7 748.9 213.0 C751.2 211.3 753.3 211.3 755.7 209.7 C758.1 208.1 760.4 205.0 762.5 204.2 C764.6 203.4 765.3 205.9 767.4 205.2 C769.5 204.5 771.8 201.7 774.3 200.3 C776.8 198.9 778.8 198.9 781.1 197.4 C783.4 195.9 785.1 192.3 787.2 191.9 C789.3 191.5 790.4 195.6 792.5 195.3 C794.6 195.0 796.3 191.5 798.6 190.0 C800.9 188.5 803.0 188.9 805.5 187.1 C808.0 185.3 810.0 180.4 812.4 179.9 C814.8 179.4 816.6 184.5 819.0 184.5 C821.4 184.5 823.5 180.5 825.8 179.9 C828.1 179.3 829.3 182.8 831.9 181.0 C834.5 179.2 837.2 170.3 840.2 169.7 C843.2 169.1 845.6 178.7 848.7 177.8 C851.8 176.9 854.5 165.9 857.3 164.8 C860.1 163.7 861.7 172.9 864.4 171.9 C867.1 170.9 869.9 162.0 872.3 159.2 C874.7 156.4 875.5 156.9 877.6 156.6 C879.7 156.3 881.6 158.1 883.7 157.8 C885.8 157.5 887.1 156.4 889.0 154.8 C890.9 153.2 891.8 148.3 894.3 149.0 C896.8 149.7 900.8 157.1 903.0 158.9 C905.2 160.7 904.7 160.1 906.6 158.9 C908.5 157.7 910.8 152.3 913.6 152.5 C916.4 152.7 920.2 158.9 922.4 160.1 C924.6 161.3 924.0 161.0 925.9 159.2 C927.8 157.4 931.2 151.7 932.9 150.1 C934.6 148.5 934.7 149.4 935.6 150.1 C936.5 150.8 937.6 153.2 938.0 153.9" fill="none" stroke="#1FE01F" stroke-width="2.2" stroke-linejoin="round" stroke-linecap="round"/>
<path d="M330 421 L344 435 M345 420 L330 435" stroke="#000" stroke-width="1" fill="none"/>
<rect x="327" y="427" width="20" height="2" fill="#E01010"/>
<rect x="336" y="418" width="2" height="20" fill="#E01010"/>
<path d="M886 141 L900 155 M901 140 L886 155" stroke="#000" stroke-width="1" fill="none"/>
<rect x="883" y="147" width="20" height="2" fill="#E01010"/>
<rect x="892" y="138" width="2" height="20" fill="#E01010"/>
<text x="795" y="145.7" font-size="10" stroke="#000" stroke-width="0.25" font-family="Liberation Sans, sans-serif" textLength="97" lengthAdjust="spacingAndGlyphs">najwiêkszy pulap lotu</text>
<text x="345" y="425.6" font-size="10" stroke="#000" stroke-width="0.25" font-family="Liberation Sans, sans-serif" textLength="133" lengthAdjust="spacingAndGlyphs">poczatek krecenia wtermice</text>
<text x="291" y="149.1" font-size="16" font-family="Liberation Sans, sans-serif" text-anchor="end" fill="#111">1100</text>
<text x="291" y="191.0" font-size="16" font-family="Liberation Sans, sans-serif" text-anchor="end" fill="#111">1000</text>
<text x="291" y="232.9" font-size="16" font-family="Liberation Sans, sans-serif" text-anchor="end" fill="#111">900</text>
<text x="291" y="274.7" font-size="16" font-family="Liberation Sans, sans-serif" text-anchor="end" fill="#111">800</text>
<text x="291" y="316.6" font-size="16" font-family="Liberation Sans, sans-serif" text-anchor="end" fill="#111">700</text>
<text x="291" y="358.5" font-size="16" font-family="Liberation Sans, sans-serif" text-anchor="end" fill="#111">600</text>
<text x="291" y="400.4" font-size="16" font-family="Liberation Sans, sans-serif" text-anchor="end" fill="#111">500</text>
<text x="291" y="442.2" font-size="16" font-family="Liberation Sans, sans-serif" text-anchor="end" fill="#111">400</text>
<text x="291" y="484.1" font-size="16" font-family="Liberation Sans, sans-serif" text-anchor="end" fill="#111">300</text>
<text x="291" y="526.0" font-size="16" font-family="Liberation Sans, sans-serif" text-anchor="end" fill="#111">200</text>
<text x="291" y="567.9" font-size="16" font-family="Liberation Sans, sans-serif" text-anchor="end" fill="#111">100</text>
<text x="291" y="609.7" font-size="16" font-family="Liberation Sans, sans-serif" text-anchor="end" fill="#111">0</text>
<text x="321.8" y="660.6" font-size="16" font-family="Liberation Sans, sans-serif" text-anchor="middle" fill="#111">53,0</text>
<text x="383.4" y="660.6" font-size="16" font-family="Liberation Sans, sans-serif" text-anchor="middle" fill="#111">53,5</text>
<text x="445.0" y="660.6" font-size="16" font-family="Liberation Sans, sans-serif" text-anchor="middle" fill="#111">54,0</text>
<text x="506.6" y="660.6" font-size="16" font-family="Liberation Sans, sans-serif" text-anchor="middle" fill="#111">54,5</text>
<text x="568.2" y="660.6" font-size="16" font-family="Liberation Sans, sans-serif" text-anchor="middle" fill="#111">55,0</text>
<text x="629.8" y="660.6" font-size="16" font-family="Liberation Sans, sans-serif" text-anchor="middle" fill="#111">55,5</text>
<text x="691.4" y="660.6" font-size="16" font-family="Liberation Sans, sans-serif" text-anchor="middle" fill="#111">56,0</text>
<text x="753.0" y="660.6" font-size="16" font-family="Liberation Sans, sans-serif" text-anchor="middle" fill="#111">56,5</text>
<text x="814.6" y="660.6" font-size="16" font-family="Liberation Sans, sans-serif" text-anchor="middle" fill="#111">57,0</text>
<text x="876.2" y="660.6" font-size="16" font-family="Liberation Sans, sans-serif" text-anchor="middle" fill="#111">57,5</text>
<text x="937.8" y="660.6" font-size="16" font-family="Liberation Sans, sans-serif" text-anchor="middle" fill="#111">58,0</text>
<text x="567" y="679" font-size="17" font-family="Liberation Sans, sans-serif" fill="#111">Time [minutes]</text>
<text transform="translate(245,450) rotate(-90)" font-size="16" font-weight="bold" font-family="Liberation Sans, sans-serif" textLength="129" lengthAdjust="spacing">Altitude [meters]</text>
</svg>
<div class="a" style="left:0px;top:749px;width:1024px;height:1px;background:#FDFDF6;"></div>
<div class="a" style="left:1.8px;top:754.04px;font-size:11px;line-height:12.64px;color:#000;letter-spacing:-0.360px;">Ready</div>
<div class="a" style="left:935px;top:752px;width:26px;height:14px;box-sizing:border-box;border:1px solid;border-color:#ACA899 #fff #fff #ACA899"></div>
<div class="a" style="left:963px;top:752px;width:28px;height:14px;box-sizing:border-box;border:1px solid;border-color:#ACA899 #fff #fff #ACA899"></div>
<div class="a" style="left:993px;top:752px;width:34px;height:14px;box-sizing:border-box;border:1px solid;border-color:#ACA899 #fff #fff #ACA899"></div>
<div class="a" style="left:965.5px;top:753.84px;font-size:11px;line-height:12.64px;color:#000;letter-spacing:-0.851px;">NUM</div>
<div class="a" style="left:0px;top:766px;width:1024px;height:1px;background:#3B6CC0;"></div>
<div class="a" style="left:0px;top:767px;width:1024px;height:1px;background:#4A86E6;"></div>
</div></body></html>
